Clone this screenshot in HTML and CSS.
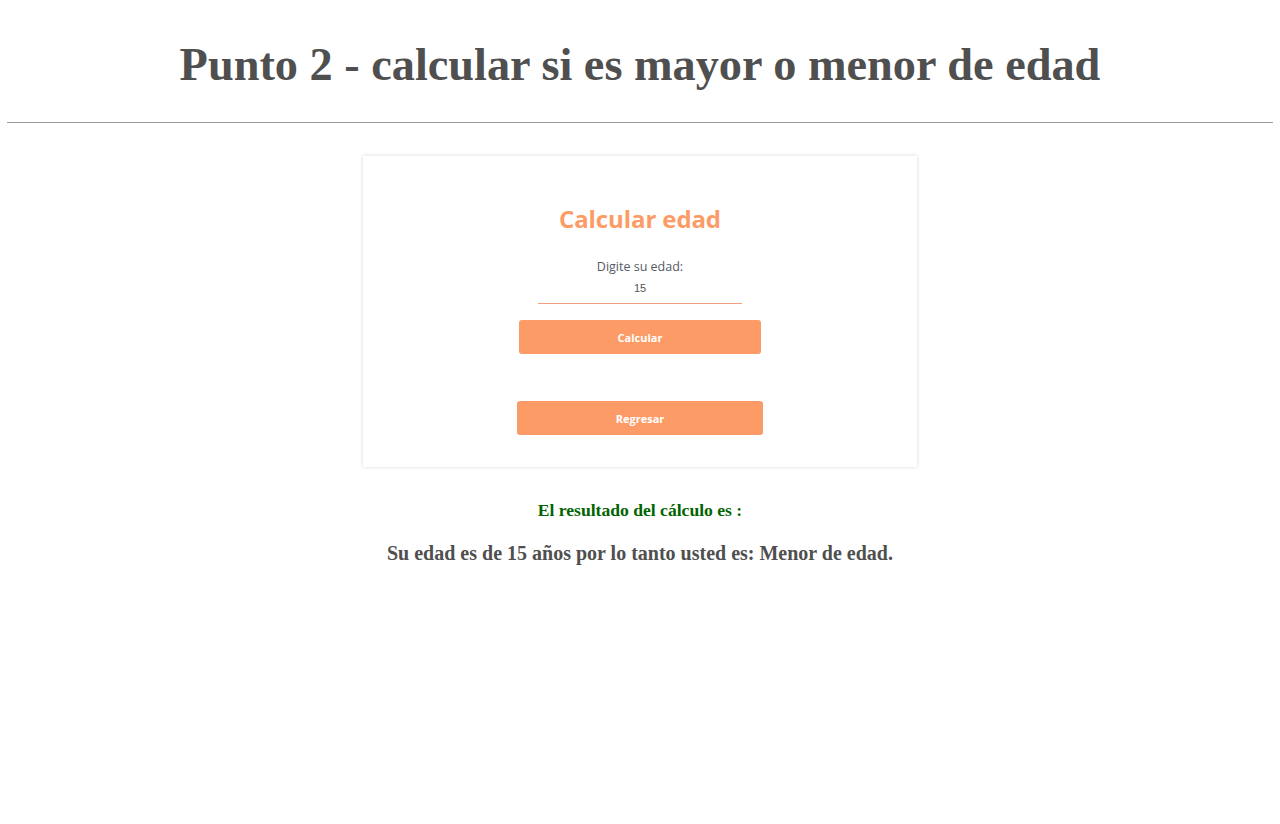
FILE: index.html
```html
<!DOCTYPE html>
<html lang="es">
<head>
<meta charset="utf-8">
<title>Punto 2</title>
<link rel="stylesheet" href="styles.css">
</head>
<body>
<h1 class="page-title">Punto 2 - calcular si es mayor o menor de edad</h1>
<hr class="divider">
<div class="card">
  <h2 class="card-title">Calcular edad</h2>
  <label class="field-label" for="edad">Digite su edad:</label>
  <input class="field-input" id="edad" type="text" value="15">
  <button class="btn btn-calc">Calcular</button>
  <button class="btn btn-back">Regresar</button>
</div>
<p class="result-title">El resultado del cálculo es :</p>
<p class="result-text">Su edad es de 15 años por lo tanto usted es: Menor de edad.</p>
</body>
</html>
```
FILE: styles.css
```css
html, body {
  margin: 0;
  padding: 0;
  background: #fff;
}
body {
  padding: 0 7px;
  font-family: "Liberation Serif", "Times New Roman", serif;
}
.page-title {
  margin: 0;
  padding-top: 37px;
  text-align: center;
  font-size: 46.3px;
  line-height: 55px;
  font-weight: bold;
  color: #4f4f4f;
}
.divider {
  margin: 30px 0 0;
  border: 0;
  border-top: 1px solid #9a9a9a;
  height: 0;
}
.card {
  width: 554px;
  height: 311px;
  box-sizing: border-box;
  margin: 33px auto 0;
  background: #fff;
  box-shadow: 0 0 4px rgba(0,0,0,0.16);
  display: flex;
  flex-direction: column;
  align-items: center;
  font-family: "Open Sans", "Noto Sans", sans-serif;
  padding-top: 47px;
}
.card-title {
  margin: 0;
  font-size: 24px;
  line-height: 32px;
  font-weight: 700;
  color: #fd9b66;
  letter-spacing: -0.1px;
}
.field-label {
  margin-top: 23px;
  font-size: 12.5px;
  line-height: 17px;
  color: #555a66;
}
.field-input {
  margin-top: 6px;
  width: 204px;
  box-sizing: border-box;
  border: 0;
  border-bottom: 1px solid #f0a07a;
  text-align: center;
  font-family: "Liberation Sans", Arial, sans-serif;
  font-size: 11px;
  color: #555;
  padding: 1px 0 9px;
  outline: none;
  background: transparent;
}
.btn {
  border: 0;
  border-radius: 3px;
  background: #fd9b66;
  color: #fff;
  font-family: "Open Sans", "Noto Sans", sans-serif;
  font-weight: 700;
  font-size: 11px;
  height: 34px;
  padding: 0;
}
.btn-calc {
  width: 242px;
  margin-top: 16px;
}
.btn-back {
  width: 246px;
  margin-top: 47px;
}
.result-title {
  margin: 32px 0 0;
  text-align: center;
  font-size: 17.6px;
  line-height: 22px;
  font-weight: bold;
  color: #006400;
}
.result-text {
  margin: 20px 0 0;
  text-align: center;
  font-size: 20px;
  line-height: 24px;
  font-weight: bold;
  color: #4f4f4f;
}
```
